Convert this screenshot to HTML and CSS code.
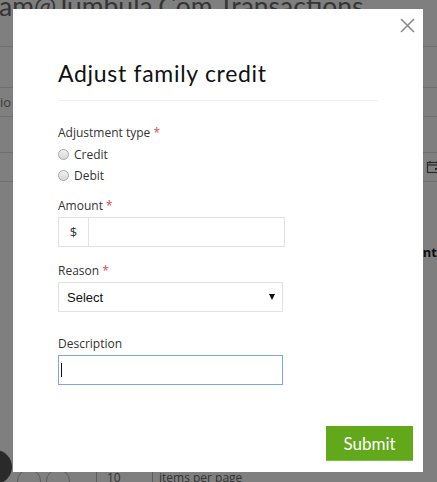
FILE: index.html
```html
<!DOCTYPE html>
<html>
<head>
<meta charset="utf-8">
<link rel="stylesheet" href="styles.css">
</head>
<body>
<div class="page">
  <h1 class="page-title">am@Jumbula.Com Transactions</h1>
  <div class="row r1"></div>
  <div class="row r2"><span class="cut">Transactio</span></div>
  <div class="row r3"></div>
  <div class="row r4">
    <svg class="cal" width="14" height="14" viewBox="0 0 14 14"><rect x="1.5" y="2.5" width="12" height="10" fill="none" stroke="#555" stroke-width="1.2"/><line x1="1.5" y1="5" x2="13.5" y2="5" stroke="#555" stroke-width="1.2"/><line x1="4" y1="1" x2="4" y2="3.5" stroke="#555" stroke-width="1.2"/><line x1="11" y1="1" x2="11" y2="3.5" stroke="#555" stroke-width="1.2"/><rect x="9" y="8" width="2" height="2" fill="#555"/></svg>
  </div>
  <div class="row r5"><span class="col-head">Adjustment</span></div>
  <div class="spacer"></div>
  <div class="pager">
    <span class="pg-dark"></span>
    <span class="pg-circle"></span>
    <span class="pg-circle"></span>
    <span class="pg-size">10</span>
    <span class="pg-text">items per page</span>
  </div>
</div>
<div class="overlay"></div>
<div class="modal">
  <svg class="close" width="15" height="15" viewBox="0 0 15 15"><line x1="1" y1="1" x2="14" y2="14" stroke="#8a8a8a" stroke-width="1.6"/><line x1="14" y1="1" x2="1" y2="14" stroke="#8a8a8a" stroke-width="1.6"/></svg>
  <div class="modal-body">
    <h2 class="modal-title">Adjust family credit</h2>
    <form class="form">
      <div class="field">
        <div class="label">Adjustment type <span class="req">*</span></div>
        <div class="radio"><span class="dot"></span>Credit</div>
        <div class="radio"><span class="dot"></span>Debit</div>
      </div>
      <div class="field f-amount">
        <div class="label">Amount <span class="req">*</span></div>
        <div class="input-group"><span class="addon">$</span><span class="ig-input"></span></div>
      </div>
      <div class="field f-reason">
        <div class="label">Reason <span class="req">*</span></div>
        <div class="select"><span>Select</span><span class="arrow"></span></div>
      </div>
      <div class="field f-desc">
        <div class="label">Description</div>
        <div class="text-input focused"><span class="caret"></span></div>
      </div>
    </form>
  </div>
  <div class="modal-footer">
    <button class="btn-submit" type="button">Submit</button>
  </div>
</div>
</body>
</html>
```
FILE: styles.css
```css
html, body { margin: 0; padding: 0; }
body {
  width: 437px;
  height: 482px;
  overflow: hidden;
  background: #fff;
  font-family: "Open Sans", "Noto Sans", sans-serif;
  position: relative;
}
.page { width: 437px; }
.page-title {
  margin: -12px 0 0 -1px;
  height: 59px;
  box-sizing: border-box;
  font-family: Lato, sans-serif;
  font-weight: 400;
  font-size: 26.5px;
  line-height: 36px;
  color: #6a6a6a;
  white-space: nowrap;
  border-bottom: 1px solid #dcdcdc;
}
.row { border-bottom: 1px solid #dcdcdc; box-sizing: border-box; position: relative; }
.r1 { height: 41px; }
.r2 { height: 29px; display: flex; align-items: center; }
.cut { margin-left: -52px; font-size: 13px; color: #777; }
.r3 { height: 36px; }
.r4 { height: 29px; display: flex; align-items: center; justify-content: flex-end; }
.cal { margin-right: -3px; }
.r5 { height: 80px; border-bottom: 0; }
.col-head { position: absolute; right: 0; bottom: 1px; font-weight: 700; font-size: 13px; color: #222; }
.spacer { height: 207px; }
.pager { display: flex; align-items: flex-start; height: 30px; }
.pg-dark { width: 34px; height: 34px; border-radius: 50%; background: #555; margin-left: -22px; margin-top: -19px; }
.pg-circle { width: 24px; height: 24px; border-radius: 50%; border: 1px solid #bbb; margin-left: 5px; box-sizing: border-box; }
.pg-size { margin-left: 26px; border-left: 1px solid #bbb; padding-left: 10px; width: 45px; font-size: 12px; color: #666; border-right: 1px solid #bbb; height: 30px; }
.pg-text { margin-left: 6px; font-size: 12px; color: #666; }

.overlay { position: absolute; inset: 0; background: rgba(0,0,0,0.5); }

.modal {
  position: absolute;
  left: 13px;
  top: 9px;
  width: 410px;
  height: 463px;
  background: #fff;
  box-sizing: border-box;
}
.close { position: absolute; right: 8px; top: 9px; }
.modal-body { padding: 49px 45px 0; }
.modal-title {
  margin: 0;
  font-family: Lato, sans-serif;
  font-weight: 400;
  font-size: 23px;
  letter-spacing: 0.7px;
  line-height: 31px;
  color: #111;
  padding-bottom: 11px;
  border-bottom: 1px solid #f0f0f0;
}
.form { margin: 23px 0 0; }
.label { font-size: 12px; line-height: 17px; color: #333; }
.req { color: #e04848; }
.field > .label { margin-bottom: 3px; }
.radio { display: flex; align-items: center; height: 21px; font-size: 12px; color: #333; }
.field > .label + .radio { margin-top: 3px; }
.dot {
  width: 9px; height: 9px; border-radius: 50%;
  border: 1px solid #a8a8a8;
  background: linear-gradient(#f0f0f0, #d8d8d8);
  margin-right: 5px;
}
.f-amount { margin-top: 11px; }
.input-group { display: flex; width: 227px; height: 30px; border: 1px solid #e2e2e2; box-sizing: border-box; }
.addon { width: 29px; border-right: 1px solid #e2e2e2; display: flex; align-items: center; justify-content: center; font-size: 13px; color: #333; }
.f-reason { margin-top: 15px; }
.select {
  width: 225px; height: 30px; box-sizing: border-box;
  border: 1px solid #e2e2e2;
  display: flex; align-items: center; justify-content: space-between;
  padding: 0 7px 0 8px;
  font-family: "Liberation Sans", Arial, sans-serif; font-size: 13px; color: #111;
}
.arrow { width: 0; height: 0; border-left: 3.5px solid transparent; border-right: 3.5px solid transparent; border-top: 6px solid #111; }
.f-desc { margin-top: 23px; }
.text-input { width: 225px; height: 30px; box-sizing: border-box; border: 1px solid #e2e2e2; display: flex; align-items: center; padding-left: 2px; }
.text-input.focused { border-color: #7fa6e4; }
.caret { width: 1px; height: 14px; background: #111; }
.modal-footer { display: flex; justify-content: flex-end; padding: 41px 10px 0; }
.btn-submit {
  width: 87px; height: 35px;
  border: 0; border-bottom: 1px solid #7cc143;
  background: #61a81a; color: #fff;
  font-family: Lato, sans-serif; font-size: 17px;
  padding: 0;
}
```
